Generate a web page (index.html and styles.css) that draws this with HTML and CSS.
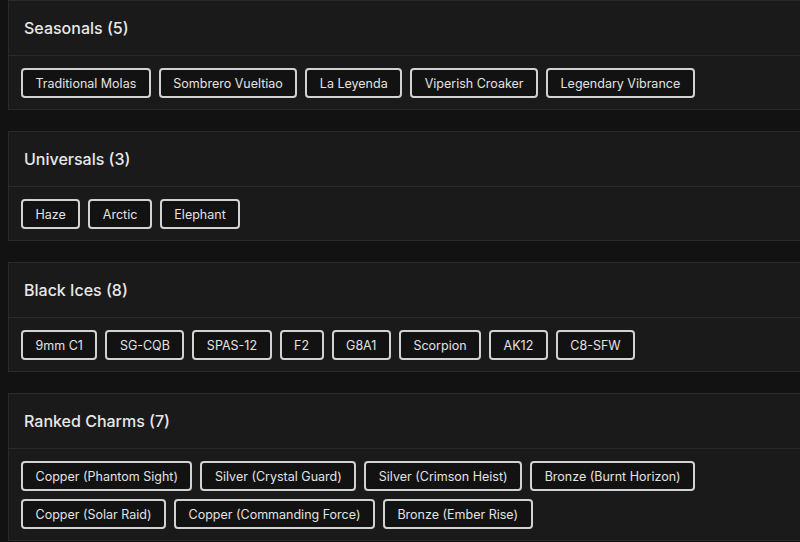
FILE: index.html
```html
<!DOCTYPE html>
<html>
<head>
<meta charset="utf-8">
<link rel="stylesheet" href="styles.css">
</head>
<body>
<div class="page">
  <section class="card">
    <h2 class="card-title">Seasonals (5)</h2>
    <div class="chips">
      <span class="chip">Traditional Molas</span>
      <span class="chip">Sombrero Vueltiao</span>
      <span class="chip">La Leyenda</span>
      <span class="chip">Viperish Croaker</span>
      <span class="chip">Legendary Vibrance</span>
    </div>
  </section>
  <section class="card">
    <h2 class="card-title">Universals (3)</h2>
    <div class="chips">
      <span class="chip">Haze</span>
      <span class="chip">Arctic</span>
      <span class="chip">Elephant</span>
    </div>
  </section>
  <section class="card">
    <h2 class="card-title">Black Ices (8)</h2>
    <div class="chips">
      <span class="chip">9mm C1</span>
      <span class="chip">SG-CQB</span>
      <span class="chip">SPAS-12</span>
      <span class="chip">F2</span>
      <span class="chip">G8A1</span>
      <span class="chip">Scorpion</span>
      <span class="chip">AK12</span>
      <span class="chip">C8-SFW</span>
    </div>
  </section>
  <section class="card">
    <h2 class="card-title">Ranked Charms (7)</h2>
    <div class="chips">
      <span class="chip">Copper (Phantom Sight)</span>
      <span class="chip">Silver (Crystal Guard)</span>
      <span class="chip">Silver (Crimson Heist)</span>
      <span class="chip">Bronze (Burnt Horizon)</span>
      <span class="chip">Copper (Solar Raid)</span>
      <span class="chip">Copper (Commanding Force)</span>
      <span class="chip">Bronze (Ember Rise)</span>
    </div>
  </section>
</div>
</body>
</html>
```
FILE: styles.css
```css
html, body {
  margin: 0;
  padding: 0;
  background: #121212;
  overflow: hidden;
}
body {
  font-family: Inter, "Open Sans", "Liberation Sans", sans-serif;
  color: #e6e6e6;
}
.page {
  padding: 0 0 0 8px;
  display: flex;
  flex-direction: column;
  gap: 21px;
  width: 820px;
}
.card {
  background: #1a1a1a;
  border: 1px solid #2a2a2a;
}
.card-title {
  margin: 0;
  height: 54px;
  display: flex;
  align-items: center;
  padding-left: 15px;
  font-size: 16px;
  font-weight: 500;
  color: #e8e8e8;
  border-bottom: 1px solid #2a2a2a;
}
.chips {
  display: flex;
  flex-wrap: wrap;
  gap: 8px 8px;
  padding: 12px 12px 11px 12px;
  width: 760px;
}
.chip {
  display: inline-flex;
  align-items: center;
  height: 26px;
  padding: 0 12.5px;
  border: 2px solid #d2d2d2;
  border-radius: 4px;
  background: #121212;
  font-size: 12.5px;
  color: #e2e2e2;
}
```
